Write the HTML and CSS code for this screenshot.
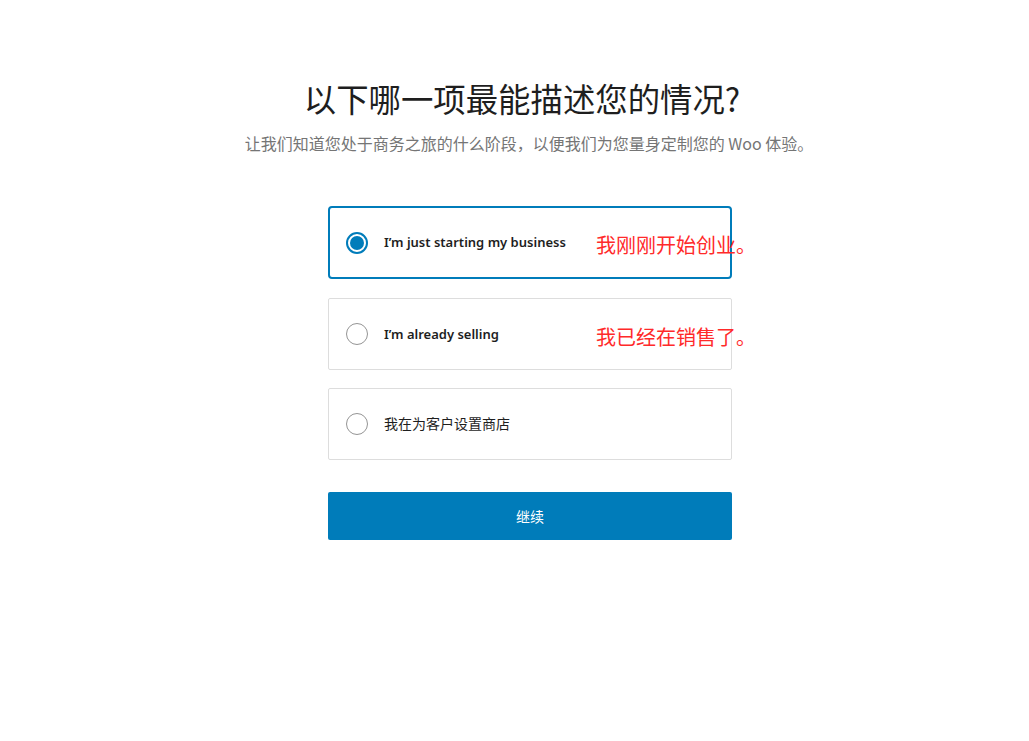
FILE: index.html
```html
<!DOCTYPE html>
<html lang="zh-CN">
<head>
<meta charset="utf-8">
<title>Woo</title>
<link rel="stylesheet" href="styles.css">
</head>
<body>
<main class="page">
  <header class="intro">
    <h1 class="title">以下哪一项最能描述您的情况?</h1>
    <p class="subtitle">让我们知道您处于商务之旅的什么阶段，以便我们为您量身定制您的 Woo 体验。</p>
  </header>
  <div class="choices">
    <label class="card card-selected">
      <span class="radio radio-on"></span>
      <span class="label">I’m just starting my business</span>
      <span class="note">我刚刚开始创业。</span>
    </label>
    <label class="card">
      <span class="radio"></span>
      <span class="label">I’m already selling</span>
      <span class="note">我已经在销售了。</span>
    </label>
    <label class="card">
      <span class="radio"></span>
      <span class="label label-cjk">我在为客户设置商店</span>
    </label>
    <button class="continue">继续</button>
  </div>
</main>
</body>
</html>
```

FILE: styles.css
```css
* { box-sizing: border-box; }
html, body {
  margin: 0;
  padding: 0;
  background: #ffffff;
}
body {
  font-family: "Noto Sans", "Noto Sans CJK SC", sans-serif;
  color: #1e1e1e;
}
.page {
  padding-top: 78px;
}
.intro {
  padding-left: 21px;
  text-align: center;
}
.title {
  margin: 0 6px 0 0;
  font-family: "Noto Sans CJK SC", sans-serif;
  font-size: 32.4px;
  line-height: 40px;
  font-weight: 400;
  color: #1e1e1e;
}
.subtitle {
  margin: 13px 0 0 8px;
  font-family: "Noto Sans CJK SC", sans-serif;
  font-size: 16px;
  line-height: 24px;
  color: #757575;
}
.choices {
  width: 404px;
  margin: 51px 0 0 328px;
  display: flex;
  flex-direction: column;
  gap: 18px;
}
.card {
  position: relative;
  height: 72px;
  flex: none;
  border: 1px solid #dddddd;
  border-radius: 2px;
  display: flex;
  align-items: center;
  padding-left: 17px;
  gap: 16px;
  background: #fff;
}
.card-selected {
  height: 73px;
  border: 2px solid #007cba;
  border-radius: 4px;
  padding-left: 16px;
  margin-bottom: 1px;
}
.radio {
  width: 22px;
  height: 22px;
  border-radius: 50%;
  border: 1px solid #949494;
  flex: none;
  display: flex;
  align-items: center;
  justify-content: center;
}
.radio-on {
  border: 2px solid #007cba;
}
.radio-on::after {
  content: "";
  width: 14px;
  height: 14px;
  border-radius: 50%;
  background: #007cba;
}
.label {
  font-size: 13px;
  font-weight: 600;
  color: #1e1e1e;
  margin-top: -1px;
}
.label-cjk {
  font-family: "Noto Sans CJK SC", sans-serif;
  font-size: 14px;
  font-weight: 400;
  margin-top: -2px;
}
.note {
  position: absolute;
  left: 267px;
  top: 24px;
  font-family: "Noto Sans CJK SC", sans-serif;
  font-size: 20px;
  line-height: 28px;
  color: #ff2a2a;
  white-space: nowrap;
}
.card-selected .note {
  left: 266px;
  top: 23px;
}
.continue {
  margin-top: 14px;
  height: 48px;
  flex: none;
  border: none;
  border-radius: 2px;
  background: #007cba;
  color: #ffffff;
  font-family: "Noto Sans CJK SC", sans-serif;
  font-size: 14px;
  cursor: pointer;
}
```
